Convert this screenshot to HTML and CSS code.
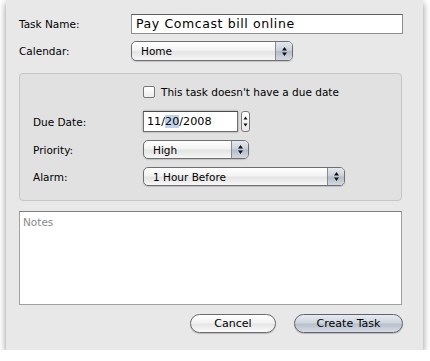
FILE: index.html
```html
<!DOCTYPE html>
<html lang="en">
<head>
<meta charset=utf-8>
<title>New Task</title>
<link rel="stylesheet" href="styles.css">
</head>
<body>
  <div class="window">
    <div class="fields">
      <label class="label">Task Name:</label>
      <div class="textfield name">Pay Comcast bill online</div>
      <label class="label">Calendar:</label>
      <div class="popup calendar">
        <span class="popup-text">Home</span>
        <span class="arrows"><svg width="7" height="11" viewBox="0 0 7 11"><path d="M3.5 1 L6 4.5 L1 4.5 Z M1 6.5 L6 6.5 L3.5 10 Z" fill="#111"/></svg></span>
      </div>
    </div>

    <div class="group">
      <div class="check-row">
        <span class="checkbox"></span>
        <span>This task doesn't have a due date</span>
      </div>
      <div class="group-fields">
        <label class="label">Due Date:</label>
        <div class="date-wrap">
          <div class="datefield">11/<span class="sel">20</span>/2008</div>
          <div class="stepper"><svg width="7" height="17" viewBox="0 0 7 17"><path d="M3.5 3.5 L5.5 6.5 L1.5 6.5 Z M1.5 10.5 L5.5 10.5 L3.5 13.5 Z" fill="#111"/></svg></div>
        </div>
        <label class="label">Priority:</label>
        <div class="popup priority">
          <span class="popup-text">High</span>
          <span class="arrows"><svg width="7" height="11" viewBox="0 0 7 11"><path d="M3.5 1 L6 4.5 L1 4.5 Z M1 6.5 L6 6.5 L3.5 10 Z" fill="#111"/></svg></span>
        </div>
        <label class="label">Alarm:</label>
        <div class="popup alarm">
          <span class="popup-text">1 Hour Before</span>
          <span class="arrows"><svg width="7" height="11" viewBox="0 0 7 11"><path d="M3.5 1 L6 4.5 L1 4.5 Z M1 6.5 L6 6.5 L3.5 10 Z" fill="#111"/></svg></span>
        </div>
      </div>
    </div>

    <div class="notes">Notes</div>

    <div class="buttons">
      <button class="btn cancel">Cancel</button>
      <button class="btn default">Create Task</button>
    </div>
  </div>
</body>
</html>
```

FILE: styles.css
```css
body { margin: 0; background: #fff; font-family: "Lucida Grande", "DejaVu Sans", sans-serif; font-size: 10.5px; color: #000; }

.window { box-sizing: border-box; width: 417px; height: 350px; margin-left: 6px; padding: 14px 20px 0 13px; background: #e8e8e8; box-shadow: 0 3px 7px rgba(0,0,0,0.45); }

.fields { display: grid; grid-template-columns: 112px 272px; row-gap: 7px; align-items: center; }
.label { font-size: 10.5px; }

.textfield { box-sizing: border-box; height: 20px; padding: 0 4px; line-height: 18px; background: #fff; border: 1px solid #8e8e8e; border-top-color: #5e5e5e; font-size: 12.5px; letter-spacing: 0.6px; }

.popup { box-sizing: border-box; display: flex; height: 20px; border: 1px solid #6f6f6f; border-radius: 5px; background: linear-gradient(#ffffff, #f3f3f3 45%, #e4e4e4 55%, #f6f6f6); box-shadow: 0 1px 1px rgba(0,0,0,0.15); overflow: hidden; }
.popup-text { flex: 1; padding-left: 9px; line-height: 18px; font-size: 10.5px; }
.arrows { display: flex; align-items: center; justify-content: center; width: 16px; border-left: 1px solid #8a8a8a; background: linear-gradient(#e4e8ef, #c9d0da 48%, #b3bcc9 52%, #d3d9e2); }
.calendar { width: 162px; }
.priority { width: 106px; height: 19px; }
.alarm { width: 202px; height: 19px; }

.group { box-sizing: border-box; width: 383px; height: 128px; margin-top: 12px; padding: 12px 0 0 13px; background: #e1e1e1; border: 1px solid #c6c6c6; border-radius: 4px; }
.check-row { display: flex; align-items: center; gap: 6px; margin-left: 110px; height: 12px; }
.checkbox { box-sizing: border-box; width: 12px; height: 12px; border: 1px solid #777; border-radius: 2px; background: linear-gradient(#ffffff, #ededed); }

.group-fields { display: grid; grid-template-columns: 110px auto; row-gap: 8px; align-items: center; margin-top: 13px; justify-items: start; }
.date-wrap { display: flex; gap: 3px; }
.datefield { box-sizing: border-box; width: 95px; height: 21px; padding: 0 3px; line-height: 19px; background: #fff; border: 1px solid #6e6e6e; border-top-color: #4a4a4a; box-shadow: 0 0 2px rgba(0,0,0,0.35); font-size: 11.2px; }
.sel { background: #bfd3ec; }
.stepper { box-sizing: border-box; display: flex; align-items: center; justify-content: center; width: 9px; height: 21px; border: 1px solid #7a7a7a; border-radius: 3px; background: linear-gradient(#ffffff, #e8e8e8); }

.notes { box-sizing: border-box; width: 383px; height: 94px; margin-top: 10px; padding: 4px 3px; background: #fff; border: 1px solid #a0a0a0; border-top-color: #7e7e7e; color: #8a8a8a; font-size: 10.5px; }

.buttons { display: flex; justify-content: flex-end; gap: 18px; margin-top: 9px; }
.btn { box-sizing: border-box; height: 19px; padding: 0; border: 1px solid #6a6a6a; border-radius: 10px; font-family: inherit; font-size: 11px; line-height: 17px; color: #000; box-shadow: 0 1px 1px rgba(0,0,0,0.2); }
.cancel { width: 86px; background: linear-gradient(#ffffff, #f2f2f2 45%, #e6e6e6 55%, #fafafa); }
.default { width: 109px; border-color: #5f6470; background: linear-gradient(#e7ebf1, #cfd5de 45%, #b8c0cc 55%, #d6dce5); }
```
